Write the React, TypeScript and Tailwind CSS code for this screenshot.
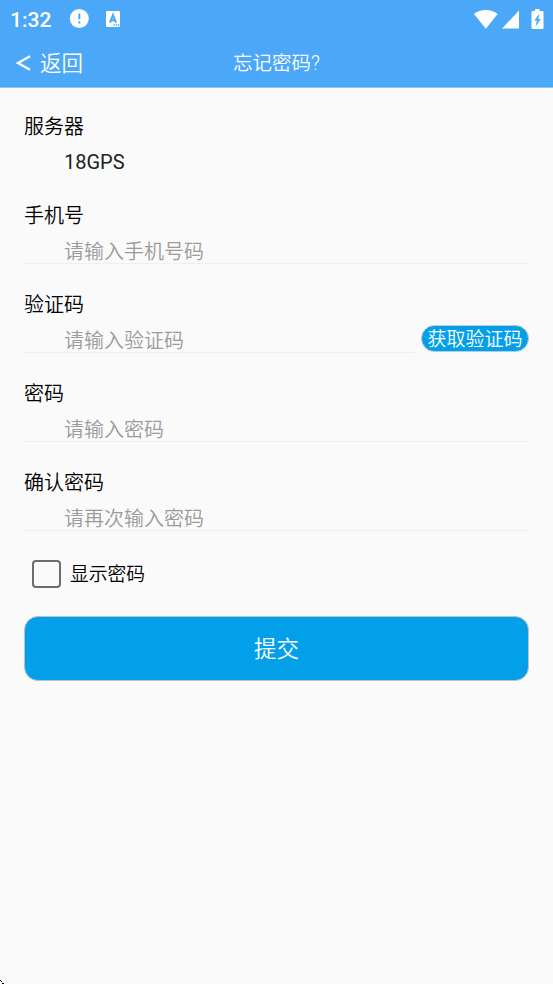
import { useState } from "react";

// 表单项类型
type Field = {
  name: string;
  label: string;
  placeholder: string;
  type: string;
  hasCode?: boolean;
};

const fields: Field[] = [
  { name: "phone", label: "手机号", placeholder: "请输入手机号码", type: "tel" },
  { name: "code", label: "验证码", placeholder: "请输入验证码", type: "text", hasCode: true },
  { name: "password", label: "密码", placeholder: "请输入密码", type: "password" },
  { name: "confirm", label: "确认密码", placeholder: "请再次输入密码", type: "password" },
];

// 顶部状态栏
function StatusBar() {
  return (
    <div className="flex h-[38px] items-center pl-[10px] pr-[9px] text-white">
      <span className="w-[59px] pt-px text-[21px] leading-[38px] font-medium">1:32</span>
      <svg className="h-[20px] w-[20px]" viewBox="0 0 20 20">
        <circle cx="10.3" cy="9.5" r="9.5" fill="#fff" />
        <path d="M10.3 4.5v5.8M10.3 12.3v2.2" stroke="#4ba8f8" strokeWidth="2" />
      </svg>
      <svg className="ml-[17px] h-[16px] w-[14px]" viewBox="0 0 14 16">
        <rect width="14" height="16" rx="1.2" fill="#fff" />
        <path d="M4 11.600 7 4l3 7.600M5 9.200h4" fill="none" stroke="#4ba8f8" strokeWidth="2" />
        <path d="M7.500 14h1.300M9.700 14h1.300M11.900 14h1.300" stroke="#4ba8f8" strokeWidth="1.500" />
      </svg>
      <svg className="ml-auto h-[19px] w-[24px]" viewBox="0 0 24 19">
        <path d="M0 4.1C3.2 1.5 7.3 0 11.8 0s8.6 1.5 11.8 4.1L11.8 18.7z" fill="#fff" />
      </svg>
      <svg className="ml-[4px] h-[19px] w-[17px]" viewBox="0 0 17 19">
        <path d="M17 .5v18H0z" fill="#fff" />
      </svg>
      <svg className="ml-[12px] h-[20px] w-[13px]" viewBox="0 0 13 20">
        <path d="M4 0h4.5v2h3q1 0 1 1v16q0 1-1 1h-10q-1 0-1-1V3q0-1 1-1H4z" fill="#fff" />
        <path d="M8.500 4.500 3.300 11.500h2.600L4.500 17.500l5.300-7.500H7.200z" fill="#4ba8f8" />
      </svg>
    </div>
  );
}

function App() {
  const [values, setValues] = useState<Record<string, string>>({});
  const [showPassword, setShowPassword] = useState<boolean>(false);

  return (
    <div className="relative h-[984px] w-full overflow-hidden bg-[#fafafa] font-[Roboto,'Noto_Sans_CJK_SC',sans-serif] text-[20px] font-[350] text-black">
      <header className="h-[88px] border-b border-[#8cc7fa] bg-[#4ba8f8] text-white">
        <StatusBar />
        <div className="grid h-[49px] grid-cols-[1fr_auto_1fr] items-center">
          <button className="flex items-center pl-4 text-[21.5px] leading-[49px]">
            <svg className="mr-[9px] h-[16px] w-[15px]" viewBox="0 0 15 16">
              <path d="M14 1.2 2 8l12 6.8" fill="none" stroke="#fff" strokeWidth="2.2" />
            </svg>
            <span>返回</span>
          </button>
          <h1 className="pt-px text-[19.5px] leading-[49px]">忘记密码?</h1>
        </div>
      </header>

      <main className="px-6 pt-[25px]">
        <div className="h-[89px]">
          <p className="leading-[28px]">服务器</p>
          <p className="pl-10 leading-[43px] font-normal text-[#212121]">18GPS</p>
        </div>

        {fields.map((field) => (
          <div key={field.name} className="h-[89px]">
            <label htmlFor={field.name} className="block leading-[28px]">
              {field.label}
            </label>
            <div className="flex">
              <input
                id={field.name}
                type={field.type === "password" && showPassword ? "text" : field.type}
                placeholder={field.placeholder}
                value={values[field.name] || ""}
                onChange={(e) => setValues({ ...values, [field.name]: e.target.value })}
                className="h-[34px] min-w-0 flex-1 border-b border-[#efefef] pt-[10px] pl-10 leading-[23px] outline-none placeholder:text-[#9b9b9b]"
              />
              {/* 获取验证码按钮 */}
              {field.hasCode && (
                <button className="mt-[6px] ml-[7px] h-[27px] w-[108px] rounded-full border border-[#b5cdd8] bg-[#03a0e9] pt-px text-[19px] leading-[25px] whitespace-nowrap text-white">
                  获取验证码
                </button>
              )}
            </div>
          </div>
        ))}

        {/* 显示密码 */}
        <label className="ml-2 mt-[1px] flex h-[29px] items-center text-[18.8px]">
          <input
            type="checkbox"
            checked={showPassword}
            onChange={() => setShowPassword(!showPassword)}
            className="mr-[9px] h-[28px] w-[29px] appearance-none rounded-[4px] border-2 border-[#6c6c6c] checked:bg-[#03a0e9]"
          />
          <span className="pt-[3px]">显示密码</span>
        </label>

        <button className="mt-[28px] h-[65px] w-full rounded-[14px] border border-[#b5c5cc] bg-[#03a0e9] pt-[3px] text-[22.5px] text-white">
          提交
        </button>
      </main>

      {/* 左下角的小黑点 */}
      <svg className="absolute bottom-0 left-0 h-[4px] w-[4px]" viewBox="0 0 4 4">
        <path d="M0 0h1v1H0zM1 1h1v1H1zM2 3h2v1H2z" fill="#000" />
      </svg>
    </div>
  );
}

export default App;
